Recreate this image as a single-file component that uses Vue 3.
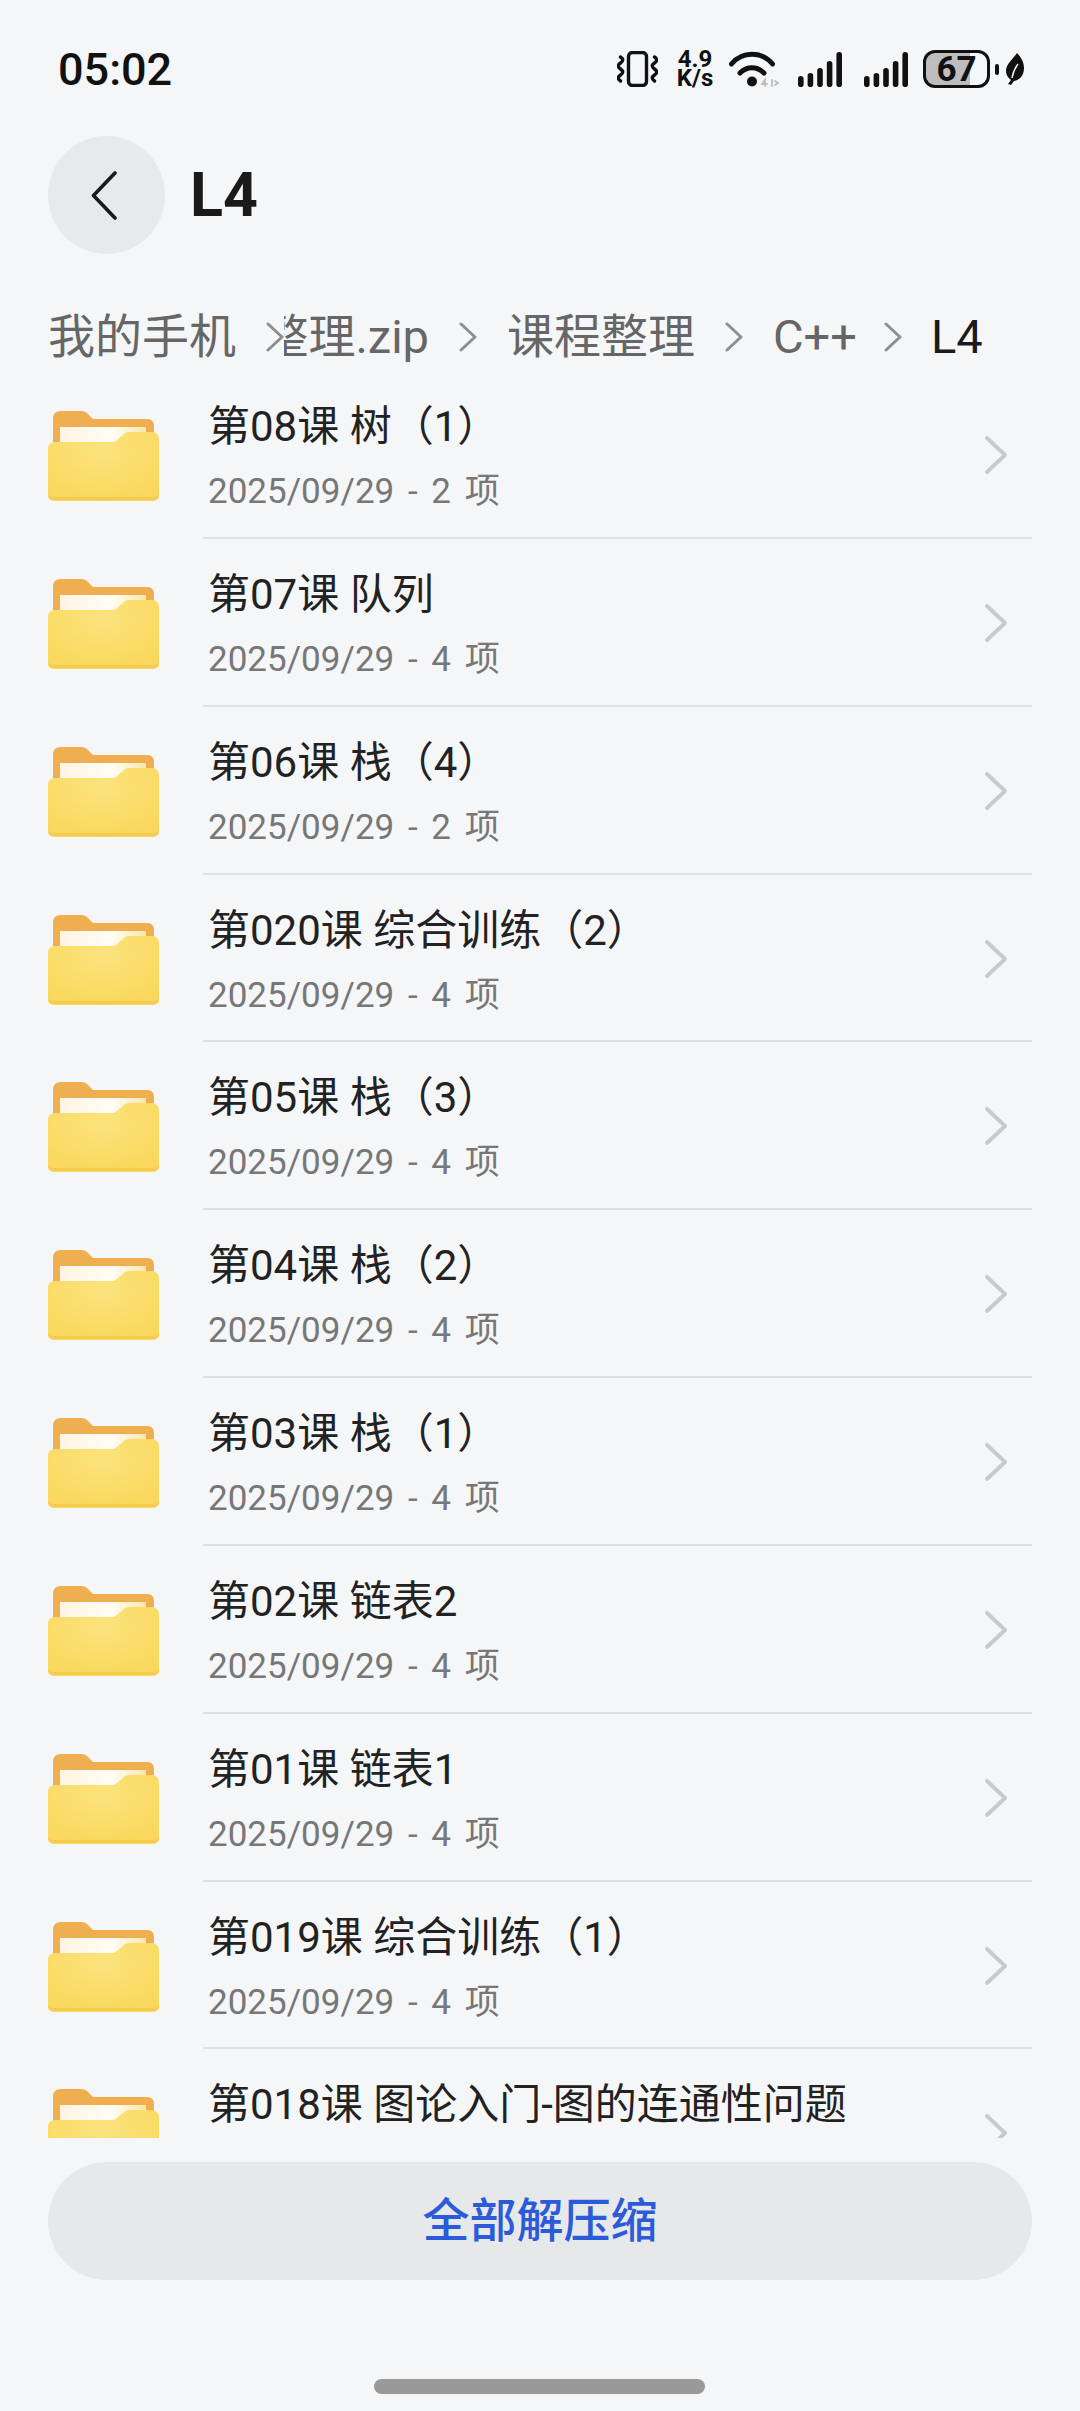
<script setup>
const folders = [
  { name: '第08课 树（1）', count: 2 },
  { name: '第07课 队列', count: 4 },
  { name: '第06课 栈（4）', count: 2 },
  { name: '第020课 综合训练（2）', count: 4 },
  { name: '第05课 栈（3）', count: 4 },
  { name: '第04课 栈（2）', count: 4 },
  { name: '第03课 栈（1）', count: 4 },
  { name: '第02课 链表2', count: 4 },
  { name: '第01课 链表1', count: 4 },
  { name: '第019课 综合训练（1）', count: 4 },
  { name: '第018课 图论入门-图的连通性问题', count: 4 },
]

const signals = [0, 1]
const bars = [
  { x: 0, h: 11 },
  { x: 9.6, h: 14 },
  { x: 19.2, h: 19 },
  { x: 28.8, h: 26 },
  { x: 38.4, h: 35 },
]
</script>

<template>
  <div class="screen">
    <header class="status">
      <span class="time">05:02</span>
      <div class="status-icons">
        <svg class="ic-vibrate" width="41" height="36" viewBox="0 0 41 36" fill="none" stroke="#111">
          <rect x="11.5" y="1.5" width="18" height="33" rx="4" stroke-width="3.4" />
          <path d="M3.500 6c3 2 3 4 0 6s-3 4 0 6 3 4 0 6-3 4 0 6M37.500 6c3 2 3 4 0 6s-3 4 0 6 3 4 0 6-3 4 0 6" stroke-width="3.4" stroke-linecap="round" />
        </svg>
        <div class="speed">
          <span>4.9</span>
          <span>K/s</span>
        </div>
        <svg class="ic-wifi" width="50" height="36" viewBox="0 0 50 36" fill="none" stroke="#111" stroke-linecap="round">
          <path d="M2.500 13C13 0 33 0 43.500 13" stroke-width="5" />
          <path d="M11 22c7-7 17-7 24 0" stroke-width="5" />
          <circle cx="23" cy="30.500" r="5" fill="#111" stroke="none" />
          <path d="M36 35v-6l-3 4h5M43 29v6M46 30l3 2-3 2" stroke="#bdbdbd" stroke-width="1.8" />
        </svg>
        <svg v-for="s in signals" :key="s" class="ic-signal" :class="{ second: s === 1 }" width="44" height="36" viewBox="0 0 44 36">
          <rect v-for="b in bars" :key="b.x" :x="b.x" :y="36 - b.h" width="5.6" :height="b.h" rx="2.8" fill="#111" />
        </svg>
        <div class="battery"><span>67</span></div>
        <span class="battery-nub"></span>
        <svg class="ic-leaf" width="18" height="32" viewBox="0 0 18 32">
          <path d="M11 0c5 5 7 10 7 15 0 7-4 12-10 13l-3 4-3-1 3-4C1 24 0 21 0 18 0 11 7 6 11 0Z" fill="#111" />
          <path d="M6 25c1-6 3-10 6-14" stroke="#f5f6f8" stroke-width="1.4" fill="none" />
        </svg>
      </div>
    </header>

    <nav class="nav">
      <button class="back" type="button" aria-label="返回">
        <svg width="26" height="49" viewBox="0 0 26 49" fill="none">
          <path d="M24 2 2.500 24.500 24 47" stroke="#1a1a1a" stroke-width="3.600" stroke-linecap="round" stroke-linejoin="round" />
        </svg>
      </button>
      <h1>L4</h1>
    </nav>

    <div class="crumbs">
      <span>我的手机</span>
      <svg class="crumb-arrow" width="18" height="30" viewBox="0 0 18 30" fill="none">
        <path d="M2 2 16 15 2 28" stroke="#8e8e8e" stroke-width="3" stroke-linecap="round" stroke-linejoin="round" />
      </svg>
      <div class="crumb-clip"><span>课程整理.zip</span></div>
      <svg class="crumb-arrow" width="18" height="30" viewBox="0 0 18 30" fill="none">
        <path d="M2 2 16 15 2 28" stroke="#8e8e8e" stroke-width="3" stroke-linecap="round" stroke-linejoin="round" />
      </svg>
      <span>课程整理</span>
      <svg class="crumb-arrow" width="18" height="30" viewBox="0 0 18 30" fill="none">
        <path d="M2 2 16 15 2 28" stroke="#8e8e8e" stroke-width="3" stroke-linecap="round" stroke-linejoin="round" />
      </svg>
      <span class="cpp">C++</span>
      <svg class="crumb-arrow" width="18" height="30" viewBox="0 0 18 30" fill="none">
        <path d="M2 2 16 15 2 28" stroke="#8e8e8e" stroke-width="3" stroke-linecap="round" stroke-linejoin="round" />
      </svg>
      <span class="current">L4</span>
    </div>

    <ul class="list">
      <li v-for="f in folders" :key="f.name" class="row">
        <svg class="folder" width="116" height="96" viewBox="0 0 116 96">
          <defs>
            <radialGradient id="front" cx="48%" cy="28%" r="72%">
              <stop offset="0" stop-color="#fbe37e" />
              <stop offset="1" stop-color="#f9d85c" />
            </radialGradient>
            <linearGradient id="paper" x1="0" y1="0" x2="1" y2="0">
              <stop offset="0" stop-color="#fff4e2" />
              <stop offset="0.6" stop-color="#fffdf6" />
              <stop offset="1" stop-color="#fae7a8" />
            </linearGradient>
          </defs>
          <path d="M7 40V11q0-8 8-8h20q5 0 8 4l4 4h54q7 0 7 7v22Z" fill="#efae4f" />
          <path d="M14 19h86v30H14Z" fill="url(#paper)" />
          <path d="M2 41q0-7 7-7h57q4 0 6-3l6-5q2-2 6-2h21q8 0 8 8v55q0 6-7 6H9q-7 0-7-6Z" fill="url(#front)" />
          <path d="M2 85v1q0 6 7 6h97q7 0 7-6v-1q0 4-7 4H9q-7 0-7-4Z" fill="#f3ca52" />
        </svg>
        <div class="row-body">
          <div class="row-text">
            <div class="name">{{ f.name }}</div>
            <div class="meta">2025/09/29 - {{ f.count }} 项</div>
          </div>
          <svg class="row-arrow" width="24" height="40" viewBox="0 0 24 40" fill="none">
            <path d="M3 3 21 20 3 37" stroke="#c9c9c9" stroke-width="3.800" stroke-linecap="round" stroke-linejoin="round" />
          </svg>
        </div>
      </li>
    </ul>

    <button class="extract" type="button">全部解压缩</button>
    <div class="home-bar"></div>
  </div>
</template>

<style scoped>
.screen {
  width: 1080px;
  height: 2411px;
  overflow: hidden;
  background: #f5f6f8;
  font-family: Roboto, "Noto Sans CJK SC", sans-serif;
  color: #222;
}

.status {
  height: 100px;
  padding: 38px 56px 0 58px;
  box-sizing: border-box;
  display: flex;
  align-items: center;
  justify-content: space-between;
}

.time {
  font-size: 45px;
  font-weight: 500;
  color: #111;
}

.status-icons {
  display: flex;
  align-items: center;
  color: #111;
}

.speed {
  display: flex;
  flex-direction: column;
  align-items: center;
  width: 36px;
  margin-left: 19px;
  font-size: 24px;
  font-weight: 700;
  line-height: 19px;
}

.ic-wifi {
  margin-left: 16px;
}

.ic-signal {
  margin-left: 19px;
}

.ic-signal.second {
  margin-left: 22px;
}

.battery {
  position: relative;
  width: 67px;
  height: 38px;
  box-sizing: border-box;
  margin-left: 15px;
  border: 3px solid #111;
  border-radius: 12px;
  background: linear-gradient(to right, #bdbdbd 0 44px, transparent 44px);
  display: flex;
  align-items: center;
  justify-content: center;
  font-size: 35px;
  font-weight: 700;
  line-height: 1;
}

.battery-nub {
  width: 4px;
  height: 11px;
  margin-left: 5px;
  border-radius: 2px;
  background: #111;
}

.ic-leaf {
  margin-left: 7px;
}

.nav {
  height: 118px;
  margin-top: 36px;
  padding-left: 48px;
  display: flex;
  align-items: center;
}

.back {
  width: 117px;
  height: 118px;
  padding: 0 6px 0 0;
  border: 0;
  border-radius: 50%;
  background: #e8e9eb;
  display: flex;
  align-items: center;
  justify-content: center;
}

.nav h1 {
  margin: 0 0 0 25px;
  font-size: 61px;
  font-weight: 700;
  color: #1a1a1a;
}

.crumbs {
  height: 56px;
  margin-top: 55px;
  padding-left: 48px;
  display: flex;
  align-items: center;
  gap: 30px;
  font-size: 47px;
  line-height: 56px;
  color: #666;
  white-space: nowrap;
}

.crumb-clip {
  width: 145px;
  margin-left: -30px;
  overflow: hidden;
  display: flex;
  justify-content: flex-end;
}

.cpp {
  margin-right: -3px;
}

.current {
  margin-left: -1px;
  color: #1a1a1a;
}

.list {
  height: 1767px;
  margin: 6px 0 0;
  padding: 0;
  list-style: none;
  overflow: hidden;
}

.row {
  height: 167.85px;
  padding: 0 48px 0 46px;
  display: flex;
}

.folder {
  flex: none;
  margin: 37px 41px 0 0;
}

.row-body {
  flex: 1;
  min-width: 0;
  padding: 30px 24px 0 5px;
  box-sizing: border-box;
  border-bottom: 2px solid #dedfe1;
  display: flex;
  justify-content: space-between;
}

.name {
  font-size: 42px;
  line-height: 52px;
  color: #222;
  white-space: nowrap;
}

.meta {
  margin-top: 17px;
  font-size: 35px;
  line-height: 44px;
  word-spacing: 5px;
  color: #777;
}

.row-arrow {
  flex: none;
  margin-top: 34px;
}

.extract {
  display: block;
  width: 984px;
  height: 118px;
  margin: 24px 0 0 48px;
  padding: 0 0 10px;
  border: 0;
  border-radius: 59px;
  background: #e7e8ea;
  font-family: inherit;
  font-size: 47px;
  font-weight: 500;
  color: #2b5bd8;
}

.home-bar {
  width: 331px;
  height: 15px;
  margin: 99px 0 0 374px;
  border-radius: 8px;
  background: #999;
}
</style>

<style>
body {
  background: #f5f6f8;
}
</style>
